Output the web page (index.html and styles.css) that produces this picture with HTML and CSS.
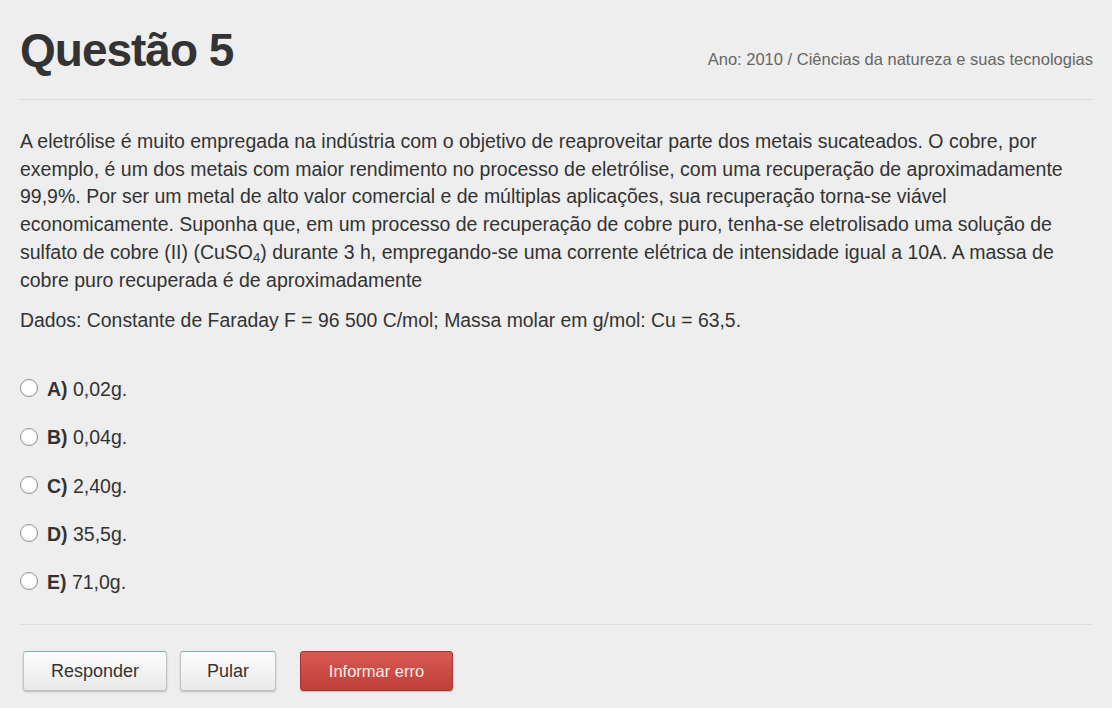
FILE: index.html
```html
<!DOCTYPE html>
<html lang="pt">
<head>
<meta charset="utf-8">
<title>Questão 5</title>
<link rel="stylesheet" href="styles.css">
</head>
<body>
<div class="page">
  <header class="header">
    <h1 class="title">Questão 5</h1>
    <div class="meta">Ano: 2010 / Ciências da natureza e suas tecnologias</div>
  </header>
  <hr class="rule">
  <p class="text">A eletrólise é muito empregada na indústria com o objetivo de reaproveitar parte dos metais sucateados. O cobre, por<br>exemplo, é um dos metais com maior rendimento no processo de eletrólise, com uma recuperação de aproximadamente<br>99,9%. Por ser um metal de alto valor comercial e de múltiplas aplicações, sua recuperação torna-se viável<br>economicamente. Suponha que, em um processo de recuperação de cobre puro, tenha-se eletrolisado uma solução de<br>sulfato de cobre (II) (CuSO<sub>4</sub>) durante 3 h, empregando-se uma corrente elétrica de intensidade igual a 10A. A massa de<br>cobre puro recuperada é de aproximadamente</p>
  <p class="text text-data">Dados: Constante de Faraday F = 96 500 C/mol; Massa molar em g/mol: Cu = 63,5.</p>
  <ul class="options">
    <li class="option"><span class="radio"></span><b>A)</b>&nbsp;0,02g.</li>
    <li class="option"><span class="radio"></span><b>B)</b>&nbsp;0,04g.</li>
    <li class="option"><span class="radio"></span><b>C)</b>&nbsp;2,40g.</li>
    <li class="option"><span class="radio"></span><b>D)</b>&nbsp;35,5g.</li>
    <li class="option"><span class="radio"></span><b>E)</b>&nbsp;71,0g.</li>
  </ul>
  <hr class="rule rule-bottom">
  <div class="actions">
    <button class="btn btn-answer">Responder</button>
    <button class="btn btn-skip">Pular</button>
    <button class="btn btn-danger">Informar erro</button>
  </div>
</div>
</body>
</html>
```
FILE: styles.css
```css
html, body {
  margin: 0;
  padding: 0;
  background: #eeeeee;
}
body {
  font-family: "Liberation Sans", Arial, sans-serif;
  color: #333333;
}
.page {
  padding: 0 19px 0 20px;
}
.header {
  display: flex;
  justify-content: space-between;
  align-items: flex-start;
  padding-top: 25px;
}
.title {
  margin: 0;
  font-size: 46px;
  line-height: 50px;
  font-weight: bold;
  color: #333;
  letter-spacing: -1px;
}
.meta {
  margin-top: 23px;
  font-size: 16.5px;
  line-height: 22px;
  color: #666;
}
.rule {
  margin: 24px 0 0;
  border: 0;
  border-top: 1px solid #dddddd;
  height: 0;
}
.text {
  margin: 28px 0 0;
  font-size: 19.5px;
  line-height: 27.7px;
  white-space: nowrap;
}
.text sub {
  font-size: 13px;
  line-height: 0;
  vertical-align: -3px;
}
.text-data {
  margin-top: 13px;
  font-size: 19.4px;
}
.options {
  list-style: none;
  margin: 41px 0 0;
  padding: 0;
  display: flex;
  flex-direction: column;
  gap: 20.6px;
}
.option {
  display: flex;
  align-items: center;
  font-size: 19.5px;
  line-height: 27.7px;
}
.option b {
  margin-left: 9px;
}
.radio {
  width: 16px;
  height: 16px;
  border: 1.5px solid #8f8f8f;
  border-radius: 50%;
  background: radial-gradient(circle at 50% 40%, #ffffff 55%, #f0f0f0 100%);
  box-sizing: content-box;
  margin-top: -3px;
}
.rule-bottom {
  margin-top: 27px;
}
.actions {
  display: flex;
  margin-top: 26px;
  padding-bottom: 17px;
}
.btn {
  height: 40px;
  font-family: "Liberation Sans", Arial, sans-serif;
  font-size: 18px;
  color: #333;
  border: 1px solid #c2c2c2;
  border-top: 1px solid #7fb5b0;
  border-radius: 3px;
  background: linear-gradient(#fdfdfd, #e9e9e9);
  box-shadow: 0 1px 2px rgba(0, 0, 0, 0.22);
  padding: 2px 0 0;
}
.btn-answer {
  margin-left: 3px;
  width: 144px;
}
.btn-skip {
  margin-left: 13px;
  width: 96px;
}
.btn-danger {
  margin-left: 24px;
  width: 153px;
  font-size: 16.5px;
  color: #fbe9e7;
  border: 1px solid #a8322c;
  background: linear-gradient(#d85a52, #c03f38);
  box-shadow: 0 1px 1px rgba(0, 0, 0, 0.2);
}
```
